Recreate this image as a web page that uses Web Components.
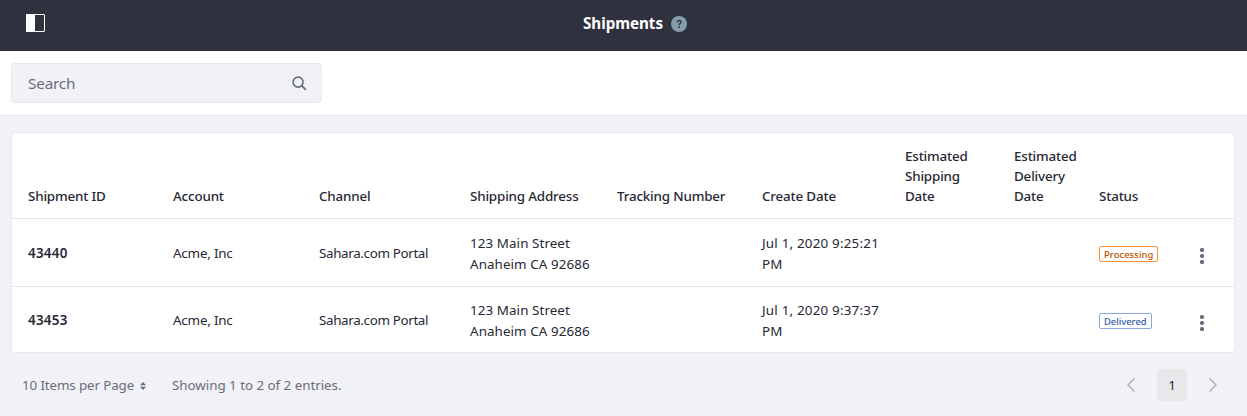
<!DOCTYPE html>
<html lang="en">
<head>
<meta charset="utf-8">
<title>Shipments</title>
<style>
html,body{margin:0;height:100%}
body{background:#f1f2f5;color:#272833;font:13.4px/21px "Noto Sans","Open Sans",sans-serif;overflow:hidden}
</style>
</head>
<body>
<shipments-app></shipments-app>
<script>
const define = (name, html) => customElements.define(name, class extends HTMLElement {
  constructor() {
    super();
    const t = document.createElement('template');
    t.innerHTML = html;
    this.attachShadow({mode: 'open'}).append(t.content.cloneNode(true));
  }
});

define('top-bar', `<style>
:host{display:grid;grid-template-columns:1fr auto 1fr;align-items:center;height:51px;padding:0 26px 0 26px;background:#30313f;color:#fff;box-sizing:border-box}
.toggle{display:block;margin-top:-6px}
.title{display:flex;align-items:center;gap:8px;margin:-4px 0 0 23px;font-weight:700;font-size:15.2px;letter-spacing:-.03px}
.help{display:block;margin-top:1px}
</style>
<svg class="toggle" width="19" height="18" viewBox="0 0 19 18"><rect x=".5" y=".5" width="18" height="17" rx=".5" fill="none" stroke="#fff"/><path fill="#fff" d="M0 0h9v18H0z"/></svg>
<div class="title"><slot></slot>
<svg class="help" width="16" height="16" viewBox="0 0 16 16"><circle cx="8" cy="8" r="8" fill="#869cad"/><path d="M6 6.400C6.100 5.100 6.900 4.500 8 4.500c1.200 0 2 .7 2 1.600C10 7.400 8 7.500 8 9.200" fill="none" stroke="#30313f" stroke-width="1.300"/><circle cx="8" cy="11.200" r=".9" fill="#30313f"/></svg></div><span></span>`);

define('search-bar', `<style>
:host{display:block;box-sizing:border-box;height:65px;padding:12px 11px;background:#fff;border-bottom:1px solid #e7e7ed}
.field{display:flex;align-items:center;justify-content:space-between;box-sizing:border-box;width:311px;height:40px;padding:0 14px 0 16px;background:#f1f2f5;border:1px solid #e7e7ed;border-radius:4px;color:#6b6c7e;font-size:15.3px;letter-spacing:-.2px}
svg{display:block}
</style>
<div class="field"><slot></slot><svg width="15" height="15" viewBox="0 0 15 15" fill="none" stroke="#6b6c7e"><circle cx="6.100" cy="6.100" r="5" stroke-width="1.600"/><path d="M9.700 9.700l4.200 4.200" stroke-width="1.900"/></svg></div>`);

define('data-card', `<style>
:host{display:block;margin:16px 12px 0 11px;background:#fff;border:1px solid #e7e7ed;border-radius:4px}
</style><slot></slot>`);

const cols = 'display:grid;grid-template-columns:145px 146px 151px 147px 145px 143px 109px 85px 1fr;padding-left:16px;box-sizing:border-box';
define('header-row', `<style>
:host{${cols};align-items:end;height:86px;padding-bottom:12px;border-bottom:1px solid #e7e7ed;font-weight:500;letter-spacing:-.17px;line-height:20px}
</style><slot></slot>`);
define('data-row', `<style>
:host{${cols};align-items:center;height:68px;padding-top:2px;border-bottom:1px solid #e7e7ed}
:host(:last-child){height:65px;padding-top:2px;border:0}
</style><slot></slot>`);
define('data-cell', `<style>
:host{display:block;white-space:nowrap}
:host([strong]){font-weight:600;letter-spacing:.25px}
:host([kind=account]){letter-spacing:-.2px}
:host([kind=channel]){letter-spacing:-.35px}
:host([kind=address]){letter-spacing:.08px}
:host([kind=date]){letter-spacing:.2px}
</style><slot></slot>`);
define('status-label', `<style>
:host{display:inline-block;vertical-align:top;box-sizing:border-box;height:16px;margin-top:1px;padding:0 4px;border:1px solid #ff8f39;border-radius:2px;color:#b95000;font-weight:500;font-size:9.400px;letter-spacing:.08px;line-height:15px}
:host([kind=info]){border-color:#89a7e0;color:#2e5aac;letter-spacing:0}
</style><slot></slot>`);
define('status-cell', `<style>
:host{display:flex;align-items:center;justify-content:space-between;padding-right:30px}
svg{display:block;margin-top:5px}
</style><slot></slot><svg width="4" height="16" fill="#6b6c7e"><circle cx="2" cy="2" r="2.100"/><circle cx="2" cy="8" r="2.100"/><circle cx="2" cy="14" r="2.100"/></svg>`);

define('page-footer', `<style>
:host{display:flex;align-items:center;height:32px;margin:16px 30px 0 22px;color:#6b6c7e}
.size{display:flex;align-items:center;gap:6px;width:150px;box-sizing:border-box;letter-spacing:-.13px}
.nav{display:flex;align-items:center;margin-left:auto}
.page{width:30px;height:32px;margin:0 22px;border-radius:4px;background:#e7e8ea;color:#272833;text-align:center;line-height:32px}
svg{display:block}
::slotted([slot=summary]){letter-spacing:-.04px}
</style>
<div class="size"><slot name="size"></slot><svg width="6" height="8" fill="#6b6c7e" style="margin-top:2px"><path d="M0 3.300L3 0l3 3.300zM0 4.700h6L3 8z"/></svg></div>
<slot name="summary"></slot>
<div class="nav"><svg width="8" height="14" viewBox="0 0 8 14" fill="none" stroke="#b2b3bd" stroke-width="1.500"><path d="M7.500.5L1 7l6.500 6.500"/></svg><div class="page">1</div><svg width="8" height="14" viewBox="0 0 8 14" fill="none" stroke="#b2b3bd" stroke-width="1.500"><path d="M.5.5L7 7 .5 13.500"/></svg></div>`);

define('shipments-app', `<style>:host{display:block}</style>
<top-bar>Shipments</top-bar>
<search-bar>Search</search-bar>
<data-card>
<header-row><data-cell>Shipment ID</data-cell><data-cell>Account</data-cell><data-cell>Channel</data-cell><data-cell>Shipping Address</data-cell><data-cell>Tracking Number</data-cell><data-cell>Create Date</data-cell><data-cell>Estimated<br>Shipping<br>Date</data-cell><data-cell>Estimated<br>Delivery<br>Date</data-cell><data-cell>Status</data-cell></header-row>
<data-row><data-cell strong>43440</data-cell><data-cell kind="account">Acme, Inc</data-cell><data-cell kind="channel">Sahara.com Portal</data-cell><data-cell kind="address">123 Main Street<br>Anaheim CA 92686</data-cell><data-cell></data-cell><data-cell kind="date">Jul 1, 2020 9:25:21<br>PM</data-cell><data-cell></data-cell><data-cell></data-cell><status-cell><status-label>Processing</status-label></status-cell></data-row>
<data-row><data-cell strong>43453</data-cell><data-cell kind="account">Acme, Inc</data-cell><data-cell kind="channel">Sahara.com Portal</data-cell><data-cell kind="address">123 Main Street<br>Anaheim CA 92686</data-cell><data-cell></data-cell><data-cell kind="date">Jul 1, 2020 9:37:37<br>PM</data-cell><data-cell></data-cell><data-cell></data-cell><status-cell><status-label kind="info">Delivered</status-label></status-cell></data-row>
</data-card>
<page-footer><span slot="size">10 Items per Page</span><span slot="summary">Showing 1 to 2 of 2 entries.</span></page-footer>`);
</script>
</body>
</html>
